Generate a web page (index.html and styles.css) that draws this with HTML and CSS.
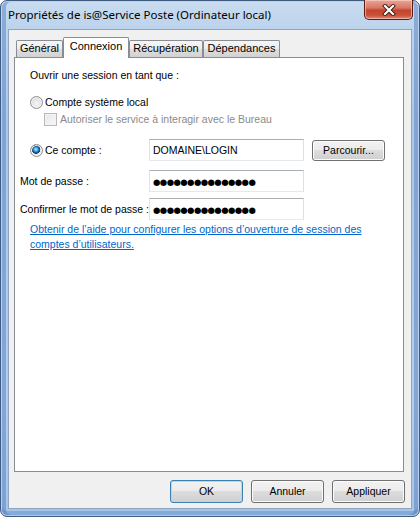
FILE: index.html
```html
<!DOCTYPE html>
<html lang="fr">
<head>
<meta charset="utf-8">
<title>Propriétés</title>
<link rel="stylesheet" href="styles.css">
</head>
<body>
<div class="window">
  <div class="titlebar">
    <span class="title">Propriétés de is@Service Poste (Ordinateur local)</span>
    <div class="close">
      <svg width="14" height="12" viewBox="0 0 14 12">
        <path d="M3 2 L11 10 M11 2 L3 10" stroke="#3a1a14" stroke-width="4" stroke-linecap="square" fill="none"/>
        <path d="M3 2 L11 10 M11 2 L3 10" stroke="#ffffff" stroke-width="2.2" stroke-linecap="square" fill="none"/>
      </svg>
    </div>
  </div>
  <div class="client">
    <div class="tabs">
      <div class="tab w-general">Général</div>
      <div class="tab selected w-conn">Connexion</div>
      <div class="tab w-recup">Récupération</div>
      <div class="tab w-dep">Dépendances</div>
    </div>
    <div class="panel">
      <div class="intro">Ouvrir une session en tant que :</div>
      <div class="opt"><span class="radio"></span><span>Compte système local</span></div>
      <div class="sub"><span class="check"></span><span class="disabled">Autoriser le service à interagir avec le Bureau</span></div>
      <div class="row first">
        <div class="flabel with-radio"><span class="radio checked"></span><span>Ce compte :</span></div>
        <div class="textbox">DOMAINE\LOGIN</div>
        <div class="btn browse">Parcourir...</div>
      </div>
      <div class="row second">
        <div class="flabel">Mot de passe :</div>
        <div class="textbox"><span class="dots">●●●●●●●●●●●●●●●</span></div>
      </div>
      <div class="row third">
        <div class="flabel">Confirmer le mot de passe :</div>
        <div class="textbox"><span class="dots">●●●●●●●●●●●●●●●</span></div>
      </div>
      <a class="link" href="#">Obtenir de l’aide pour configurer les options d’ouverture de session des<br>comptes d’utilisateurs.</a>
    </div>
    <div class="buttons">
      <div class="btn default">OK</div>
      <div class="btn">Annuler</div>
      <div class="btn">Appliquer</div>
    </div>
  </div>
</div>
</body>
</html>
```

FILE: styles.css
```css
* { box-sizing: border-box; }

html, body {
  margin: 0;
  padding: 0;
  background: #ffffff;
}

body {
  font-family: "Liberation Sans", Arial, sans-serif;
  font-size: 10.5px;
  color: #000;
}

.window {
  width: 420px;
  height: 517px;
  border: 1px solid #3f5c80;
  border-radius: 7px;
  background: linear-gradient(to bottom, #c9dcf0 0, #bcd3ec 28px, #adc8e8 120px, #b4cdea 400px, #a8c4e6 100%);
  box-shadow: inset 0 0 0 1px rgba(255, 255, 255, 0.55), inset 4px 0 0 1px rgba(70, 120, 190, 0.45), inset -4px 0 0 1px rgba(70, 120, 190, 0.45), inset 0 -4px 0 1px rgba(70, 120, 190, 0.35);
  padding: 0 7px 7px 7px;
  display: flex;
  flex-direction: column;
}

.titlebar {
  height: 28px;
  display: flex;
  align-items: flex-start;
}

.title {
  flex: 1;
  font-family: "Noto Sans", "Liberation Sans", sans-serif;
  font-size: 11.5px;
  line-height: 14px;
  margin-top: 7px;
  color: #000;
  white-space: nowrap;
}

.close {
  width: 49px;
  height: 20px;
  margin-top: -1px;
  margin-right: -1px;
  border: 1px solid #5a1b12;
  border-top: none;
  border-radius: 0 0 5px 5px;
  background: linear-gradient(to bottom, #e8a597 0, #d77a66 40%, #c4452f 55%, #c9503a 80%, #e08a70 100%);
  box-shadow: inset 0 0 0 1px rgba(255, 220, 210, 0.55);
  display: flex;
  align-items: center;
  justify-content: center;
}

.client {
  flex: 1;
  background: #f0f0f0;
  border: 1px solid #8ea5c2;
  padding: 7px 7px 5px 5px;
  display: flex;
  flex-direction: column;
}

.tabs {
  height: 20px;
  display: flex;
  align-items: flex-end;
  padding-left: 2px;
}

.tab {
  height: 17px;
  border: 1px solid #898c95;
  border-bottom: none;
  border-radius: 2px 2px 0 0;
  background: linear-gradient(to bottom, #f6f6f6 0, #ececec 50%, #dfdfdf 50%, #d2d2d2 100%);
  text-align: center;
  font-size: 11px;
  line-height: 15px;
  white-space: nowrap;
}

.tab.selected {
  height: 21px;
  margin-bottom: -1px;
  background: #ffffff;
  line-height: 17px;
  position: relative;
  z-index: 1;
}

.w-general { width: 47px; }
.w-conn { width: 66px; }
.w-recup { width: 74px; }
.w-dep { width: 77px; }

.panel {
  height: 415px;
  background: #ffffff;
  border: 1px solid #898c95;
  padding: 11px 0 0 0;
}

.intro {
  line-height: 13px;
  margin-left: 15px;
}

.opt {
  margin-top: 14px;
  margin-left: 15px;
  height: 13px;
  display: flex;
  align-items: center;
  gap: 2px;
  line-height: 13px;
}

.sub {
  margin-top: 4px;
  margin-left: 29px;
  height: 13px;
  display: flex;
  align-items: center;
  gap: 3px;
  line-height: 13px;
}

.disabled { color: #8a8a8a; }

.radio {
  width: 13px;
  height: 13px;
  border-radius: 50%;
  border: 1px solid #8e8f8f;
  background: radial-gradient(circle at 50% 60%, #f6f6f6 0, #e6e6e6 45%, #cfcfcf 100%);
  box-shadow: inset 0 0 0 1px #f4f4f4;
  flex: none;
  display: inline-block;
}

.radio.checked {
  background:
    radial-gradient(circle at 45% 40%, #b9ecff 0, #5fb8ea 1.5px, #1a63a8 3px, #1b3f6b 4.2px, transparent 4.6px),
    radial-gradient(circle at 50% 60%, #f6f6f6 0, #e6e6e6 45%, #cfcfcf 100%);
}

.check {
  width: 13px;
  height: 13px;
  border: 1px solid #b8b8b8;
  background: linear-gradient(135deg, #e8e8e8 0, #f7f7f7 100%);
  box-shadow: inset 0 0 0 1px #f4f4f4;
  flex: none;
}

.row {
  display: flex;
  align-items: center;
  height: 22px;
}

.row.first { margin-top: 13px; }
.row.second { margin-top: 9px; }
.row.third { margin-top: 6px; }

.flabel {
  width: 134px;
  padding-left: 5px;
  white-space: nowrap;
  display: flex;
  align-items: center;
}

.flabel.with-radio {
  padding-left: 15px;
  gap: 2px;
}

.textbox {
  width: 155px;
  height: 22px;
  border: 1px solid;
  border-color: #abadb3 #dbdfe6 #e3e9ef #e2e3ea;
  padding: 0 3px;
  line-height: 20px;
  background: #fff;
  white-space: nowrap;
  overflow: hidden;
}

.dots {
  font-family: "DejaVu Sans", sans-serif;
  font-size: 8.5px;
  letter-spacing: -0.6px;
}

.btn {
  width: 73px;
  height: 23px;
  border: 1px solid #707070;
  border-radius: 3px;
  background: linear-gradient(to bottom, #f2f2f2 0, #ebebeb 50%, #dddddd 50%, #cfcfcf 100%);
  box-shadow: inset 0 0 0 1px #fbfbfb;
  text-align: center;
  line-height: 21px;
}

.btn.browse {
  height: 21px;
  line-height: 19px;
  margin-left: 8px;
}

.btn.default {
  border-color: #3c7fb1;
  box-shadow: inset 0 0 0 1px #a8dbf6;
}

.link {
  display: block;
  margin: 2px 0 0 15px;
  color: #0066cc;
  line-height: 15px;
  text-decoration: underline;
}

.buttons {
  display: flex;
  justify-content: flex-end;
  gap: 8px;
  margin-top: 8px;
  margin-right: -1px;
}
```
